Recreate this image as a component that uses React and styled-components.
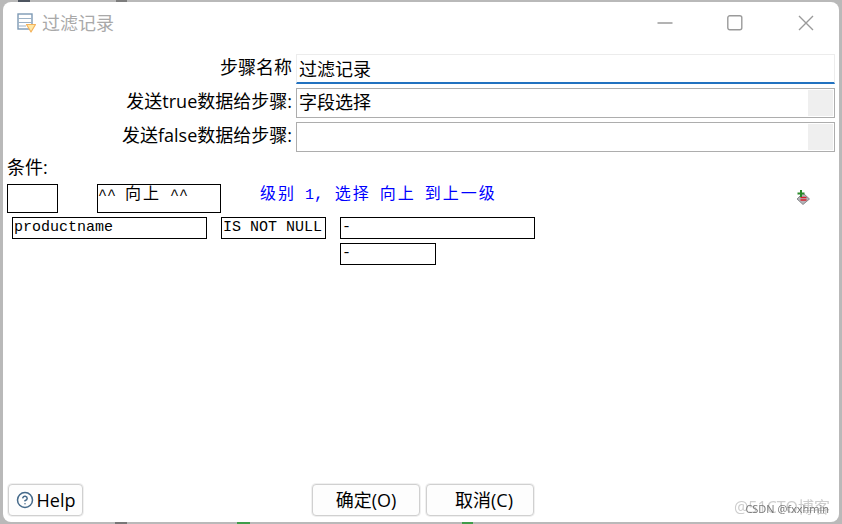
import React from "react";
import styled, { createGlobalStyle } from "styled-components";
import { CircleHelp } from "lucide-react";

const UI_FONT = `"Open Sans", "Noto Sans CJK SC", sans-serif`;
const MONO_FONT = `"Liberation Mono", "Noto Sans CJK SC", monospace`;

const GlobalStyle = createGlobalStyle`
  html, body {
    margin: 0;
    padding: 0;
    background: #b9b9b9;
  }
  * {
    box-sizing: border-box;
  }
`;

export default function App() {
  return (
    <Page>
      <GlobalStyle />
      <Scrap $left={18} $top={0} $w={12} $h={2} $color="#4d5560" />
      <Scrap $left={116} $top={0} $w={11} $h={2} $color="#7d7d7d" />
      <Scrap $left={115} $top={522} $w={12} $h={2} $color="#777" />
      <Scrap $left={237} $top={522} $w={13} $h={2} $color="#3f9c4a" />
      <Scrap $left={462} $top={522} $w={11} $h={2} $color="#3f9c4a" />
      <Window>
        <TitleBar>
          <TitleLeft>
            <StepIcon />
            <TitleText>过滤记录</TitleText>
          </TitleLeft>
          <Controls>
            <Control width="16" height="16" viewBox="0 0 16 16">
              <path d="M1.5 8h15" />
            </Control>
            <Control width="16" height="16" viewBox="0 0 16 16">
              <rect x="0.8" y="0.8" width="14" height="14" rx="2" />
            </Control>
            <Control width="16" height="16" viewBox="0 0 16 16">
              <path d="M1 1l14 14M15 1L1 15" />
            </Control>
          </Controls>
        </TitleBar>

        <Form>
          <Label>步骤名称</Label>
          <Field $active>过滤记录</Field>
          <Label>发送true数据给步骤:</Label>
          <Field>
            字段选择
            <DropButton />
          </Field>
          <Label>发送false数据给步骤:</Label>
          <Field>
            <DropButton />
          </Field>
        </Form>

        <ConditionLabel>条件:</ConditionLabel>

        <LevelRow>
          <LevelBox $width={51} />
          <LevelBox $width={124}>
            ^^ <Han>向上</Han> ^^
          </LevelBox>
          <LevelHint>
            <Han>级别</Han> 1<Han>,</Han> <Han>选择</Han> <Han>向上</Han> <Han>到上一级</Han>
          </LevelHint>
          <AddIcon />
        </LevelRow>

        <ConditionRow>
          <CondBox $width={195}>productname</CondBox>
          <CondBox $width={105}>IS NOT NULL</CondBox>
          <ValueColumn>
            <CondBox $width={195}>-</CondBox>
            <CondBox $width={96}>-</CondBox>
          </ValueColumn>
        </ConditionRow>

        <Footer>
          <FooterButton $width={75} $gapRight={229}>
            <CircleHelp size={18} color="#44698a" strokeWidth={2} />
            Help
          </FooterButton>
          <FooterButton $width={108} $gapRight={6}>确定(O)</FooterButton>
          <FooterButton $width={108} $indent={8}>取消(C)</FooterButton>
        </Footer>

        <Watermark>@51CTO博客</Watermark>
        <Credit>CSDN @fxxhmin</Credit>
      </Window>
    </Page>
  );
}

const StepIcon = () => (
  <svg width="20" height="20" viewBox="0 0 20 20">
    <rect x="1" y="1" width="14" height="15" fill="#fff" stroke="#7d99b4" strokeWidth="1.4" />
    <path d="M1 5.5h14M1 9.5h14M1 13h8" stroke="#9db2c6" strokeWidth="1.2" />
    <path d="M9.5 11.5h9L14 19z" fill="#ffe9a8" stroke="#f4b25c" strokeWidth="1.2" strokeLinejoin="round" />
  </svg>
);

const AddIcon = () => (
  <AddIconSvg width="16" height="16" viewBox="0 0 16 16">
    <path d="M8 4l6.5 6L8 15.5 2 10z" fill="#b4b4b8" stroke="#77777c" strokeWidth="0.8" />
    <path d="M5.5 8.5h6M5.5 11h6" stroke="#d8202c" strokeWidth="1.4" />
    <path d="M6 1v7M2.5 4.5h7" stroke="#2a8a2a" strokeWidth="2" />
  </AddIconSvg>
);

const Page = styled.div`
  position: relative;
  width: 842px;
  height: 524px;
  padding: 2px 3px;
  overflow: hidden;
  background: #b9b9b9;
`;

const Scrap = styled.span`
  position: absolute;
  left: ${(p) => p.$left}px;
  top: ${(p) => p.$top}px;
  width: ${(p) => p.$w}px;
  height: ${(p) => p.$h}px;
  background: ${(p) => p.$color};
`;

const Window = styled.div`
  position: relative;
  display: flex;
  flex-direction: column;
  width: 100%;
  height: 100%;
  background: #fff;
  border-radius: 8px;
  overflow: hidden;
  font-family: ${UI_FONT};
  color: #000;
`;

const TitleBar = styled.div`
  display: flex;
  align-items: center;
  justify-content: space-between;
  height: 42px;
  padding: 0 25px 0 14px;
`;

const TitleLeft = styled.div`
  display: flex;
  align-items: center;
  gap: 5px;
`;

const TitleText = styled.span`
  font-size: 18px;
  line-height: 24px;
  color: #a9a9a9;
`;

const Controls = styled.div`
  display: flex;
  align-items: center;
  gap: 55px;
`;

const Control = styled.svg`
  fill: none;
  stroke: #9a9a9a;
  stroke-width: 1.4;
  overflow: visible;
`;

const Form = styled.div`
  display: grid;
  grid-template-columns: 289px 1fr;
  grid-auto-rows: 30px;
  column-gap: 4px;
  row-gap: 4px;
  margin-top: 10px;
  padding-right: 4px;
`;

const Label = styled.div`
  display: flex;
  align-items: center;
  justify-content: flex-end;
  padding-bottom: 5px;
  font-size: 18px;
  line-height: 24px;
  white-space: nowrap;
`;

const Field = styled.div`
  display: flex;
  align-items: center;
  justify-content: space-between;
  padding: 0 1px ${(p) => (p.$active ? 0 : 2)}px 2px;
  font-size: 18px;
  line-height: 24px;
  background: #fff;
  border: 1px solid ${(p) => (p.$active ? "#ececec" : "#adadad")};
  border-bottom: ${(p) => (p.$active ? "2px solid #2272c0" : "1px solid #adadad")};
`;

const DropButton = styled.span`
  align-self: center;
  width: 25px;
  height: 26px;
  margin: 0 0 -2px auto;
  background: #efefef;
`;

const ConditionLabel = styled.div`
  height: 20px;
  margin: 5px 0 0 4px;
  font-size: 18px;
  line-height: 20px;
`;

const LevelRow = styled.div`
  display: flex;
  align-items: center;
  gap: 39px;
  height: 29px;
  margin-top: 7px;
  padding: 0 28px 0 4px;
`;

const LevelBox = styled.div`
  flex: none;
  width: ${(p) => p.$width}px;
  height: 29px;
  border: 1px solid #000;
  font: 15px/20px ${MONO_FONT};
  white-space: pre;
`;

const Han = styled.span`
  font-size: 16px;
  letter-spacing: 2px;
`;

const LevelHint = styled.span`
  margin-bottom: 6px;
  font: 15px/18px ${MONO_FONT};
  color: #0000ff;
  white-space: pre;
`;

const AddIconSvg = styled.svg`
  margin-left: auto;
  margin-top: -4px;
`;

const ConditionRow = styled.div`
  display: flex;
  align-items: flex-start;
  gap: 14px;
  margin-top: 4px;
  padding-left: 9px;
`;

const ValueColumn = styled.div`
  display: flex;
  flex-direction: column;
  gap: 4px;
`;

const CondBox = styled.div`
  width: ${(p) => p.$width}px;
  height: 22px;
  padding: 1px 0 0 1px;
  border: 1px solid #000;
  font: 15px/18px ${MONO_FONT};
  white-space: pre;
`;

const Footer = styled.div`
  display: flex;
  align-items: center;
  margin-top: auto;
  padding: 0 0 6px 5px;
`;

const FooterButton = styled.button`
  display: flex;
  flex: none;
  align-items: center;
  justify-content: center;
  gap: 3px;
  width: ${(p) => p.$width}px;
  height: 32px;
  margin-right: ${(p) => p.$gapRight || 0}px;
  padding: 0 0 0 ${(p) => p.$indent || 0}px;
  border: 1px solid #d0d0d0;
  border-radius: 4px;
  background: #fdfdfd;
  box-shadow: 0 0 0 1px #f0f0f0;
  font-family: ${UI_FONT};
  font-size: 18px;
  line-height: 24px;
  color: #000;
`;

const Watermark = styled.span`
  position: absolute;
  right: 9px;
  bottom: 4px;
  font-size: 16px;
  line-height: 22px;
  color: #cdcdcd;
  filter: blur(0.4px);
`;

const Credit = styled.span`
  position: absolute;
  right: 10px;
  bottom: 6px;
  font-size: 11px;
  line-height: 14px;
  color: #777;
  filter: blur(0.3px);
`;
